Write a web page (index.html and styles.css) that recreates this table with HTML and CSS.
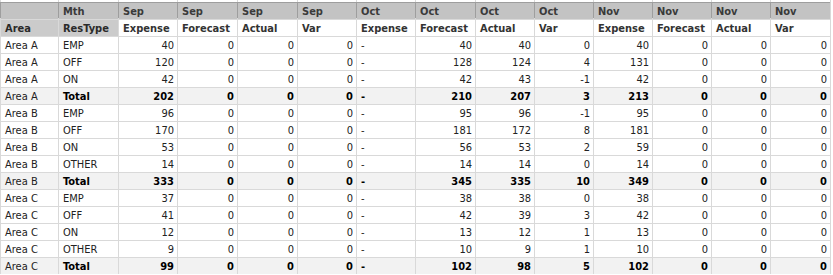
FILE: index.html
```html
<!DOCTYPE html>
<html>
<head>
<meta charset="utf-8">
<link rel="stylesheet" href="styles.css">
</head>
<body>
<div class="grid">
  <div class="c top"></div><div class="c top"></div><div class="c top"></div><div class="c top"></div><div class="c top"></div><div class="c top"></div><div class="c top"></div><div class="c top"></div><div class="c top"></div><div class="c top"></div><div class="c top"></div><div class="c top"></div><div class="c top"></div><div class="c top"></div>

  <div class="c h1"></div><div class="c h1">Mth</div><div class="c h1">Sep</div><div class="c h1">Sep</div><div class="c h1">Sep</div><div class="c h1">Sep</div><div class="c h1">Oct</div><div class="c h1">Oct</div><div class="c h1">Oct</div><div class="c h1">Oct</div><div class="c h1">Nov</div><div class="c h1">Nov</div><div class="c h1">Nov</div><div class="c h1">Nov</div>

  <div class="c h2 g">Area</div><div class="c h2 g">ResType</div><div class="c h2">Expense</div><div class="c h2">Forecast</div><div class="c h2">Actual</div><div class="c h2">Var</div><div class="c h2">Expense</div><div class="c h2">Forecast</div><div class="c h2">Actual</div><div class="c h2">Var</div><div class="c h2">Expense</div><div class="c h2">Forecast</div><div class="c h2">Actual</div><div class="c h2">Var</div>

  <div class="c">Area A</div><div class="c">EMP</div><div class="c n">40</div><div class="c n">0</div><div class="c n">0</div><div class="c n">0</div><div class="c">-</div><div class="c n">40</div><div class="c n">40</div><div class="c n">0</div><div class="c n">40</div><div class="c n">0</div><div class="c n">0</div><div class="c n">0</div>
  <div class="c">Area A</div><div class="c">OFF</div><div class="c n">120</div><div class="c n">0</div><div class="c n">0</div><div class="c n">0</div><div class="c">-</div><div class="c n">128</div><div class="c n">124</div><div class="c n">4</div><div class="c n">131</div><div class="c n">0</div><div class="c n">0</div><div class="c n">0</div>
  <div class="c">Area A</div><div class="c">ON</div><div class="c n">42</div><div class="c n">0</div><div class="c n">0</div><div class="c n">0</div><div class="c">-</div><div class="c n">42</div><div class="c n">43</div><div class="c n">-1</div><div class="c n">42</div><div class="c n">0</div><div class="c n">0</div><div class="c n">0</div>
  <div class="c tot">Area A</div><div class="c tot b">Total</div><div class="c tot b n">202</div><div class="c tot b n">0</div><div class="c tot b n">0</div><div class="c tot b n">0</div><div class="c tot b">-</div><div class="c tot b n">210</div><div class="c tot b n">207</div><div class="c tot b n">3</div><div class="c tot b n">213</div><div class="c tot b n">0</div><div class="c tot b n">0</div><div class="c tot b n">0</div>

  <div class="c">Area B</div><div class="c">EMP</div><div class="c n">96</div><div class="c n">0</div><div class="c n">0</div><div class="c n">0</div><div class="c">-</div><div class="c n">95</div><div class="c n">96</div><div class="c n">-1</div><div class="c n">95</div><div class="c n">0</div><div class="c n">0</div><div class="c n">0</div>
  <div class="c">Area B</div><div class="c">OFF</div><div class="c n">170</div><div class="c n">0</div><div class="c n">0</div><div class="c n">0</div><div class="c">-</div><div class="c n">181</div><div class="c n">172</div><div class="c n">8</div><div class="c n">181</div><div class="c n">0</div><div class="c n">0</div><div class="c n">0</div>
  <div class="c">Area B</div><div class="c">ON</div><div class="c n">53</div><div class="c n">0</div><div class="c n">0</div><div class="c n">0</div><div class="c">-</div><div class="c n">56</div><div class="c n">53</div><div class="c n">2</div><div class="c n">59</div><div class="c n">0</div><div class="c n">0</div><div class="c n">0</div>
  <div class="c">Area B</div><div class="c">OTHER</div><div class="c n">14</div><div class="c n">0</div><div class="c n">0</div><div class="c n">0</div><div class="c">-</div><div class="c n">14</div><div class="c n">14</div><div class="c n">0</div><div class="c n">14</div><div class="c n">0</div><div class="c n">0</div><div class="c n">0</div>
  <div class="c tot">Area B</div><div class="c tot b">Total</div><div class="c tot b n">333</div><div class="c tot b n">0</div><div class="c tot b n">0</div><div class="c tot b n">0</div><div class="c tot b">-</div><div class="c tot b n">345</div><div class="c tot b n">335</div><div class="c tot b n">10</div><div class="c tot b n">349</div><div class="c tot b n">0</div><div class="c tot b n">0</div><div class="c tot b n">0</div>

  <div class="c">Area C</div><div class="c">EMP</div><div class="c n">37</div><div class="c n">0</div><div class="c n">0</div><div class="c n">0</div><div class="c">-</div><div class="c n">38</div><div class="c n">38</div><div class="c n">0</div><div class="c n">38</div><div class="c n">0</div><div class="c n">0</div><div class="c n">0</div>
  <div class="c">Area C</div><div class="c">OFF</div><div class="c n">41</div><div class="c n">0</div><div class="c n">0</div><div class="c n">0</div><div class="c">-</div><div class="c n">42</div><div class="c n">39</div><div class="c n">3</div><div class="c n">42</div><div class="c n">0</div><div class="c n">0</div><div class="c n">0</div>
  <div class="c">Area C</div><div class="c">ON</div><div class="c n">12</div><div class="c n">0</div><div class="c n">0</div><div class="c n">0</div><div class="c">-</div><div class="c n">13</div><div class="c n">12</div><div class="c n">1</div><div class="c n">13</div><div class="c n">0</div><div class="c n">0</div><div class="c n">0</div>
  <div class="c">Area C</div><div class="c">OTHER</div><div class="c n">9</div><div class="c n">0</div><div class="c n">0</div><div class="c n">0</div><div class="c">-</div><div class="c n">10</div><div class="c n">9</div><div class="c n">1</div><div class="c n">10</div><div class="c n">0</div><div class="c n">0</div><div class="c n">0</div>
  <div class="c tot">Area C</div><div class="c tot b">Total</div><div class="c tot b n">99</div><div class="c tot b n">0</div><div class="c tot b n">0</div><div class="c tot b n">0</div><div class="c tot b">-</div><div class="c tot b n">102</div><div class="c tot b n">98</div><div class="c tot b n">5</div><div class="c tot b n">102</div><div class="c tot b n">0</div><div class="c tot b n">0</div><div class="c tot b n">0</div>
</div>
</body>
</html>
```

FILE: styles.css
```css
html, body {
  margin: 0;
  padding: 0;
  background: #ffffff;
  overflow: hidden;
}

.grid {
  display: grid;
  width: max-content;
  grid-template-columns: 57px 59px 58px 59px 59px 58px 58px 59px 58px 58px 58px 58px 58px 59px;
  grid-template-rows: 2px;
  grid-auto-rows: 16px;
  gap: 1px;
  padding: 0 1px;
  background: #d9d9d9;
  font-family: "DejaVu Sans Condensed", "DejaVu Sans", sans-serif;
  font-stretch: condensed;
  font-size: 11px;
  color: #222222;
}

.c {
  background: #ffffff;
  line-height: 16px;
  padding: 1px 3px 0 4px;
  box-sizing: border-box;
  white-space: nowrap;
  overflow: hidden;
}

.top {
  padding: 0;
}

.h1 {
  background: #c3c3c3;
  color: #3a3a3a;
  font-weight: bold;
  box-shadow: 0 -1px 0 #9e9e9e, -1px -1px 0 #9e9e9e;
}

.h2 {
  font-weight: bold;
  color: #333333;
}

.h2.g {
  background: #cbcbcb;
  color: #2a2a2a;
}

.n {
  text-align: right;
}

.tot {
  background: #f2f2f2;
}

.b {
  font-weight: bold;
  color: #000000;
}
```
